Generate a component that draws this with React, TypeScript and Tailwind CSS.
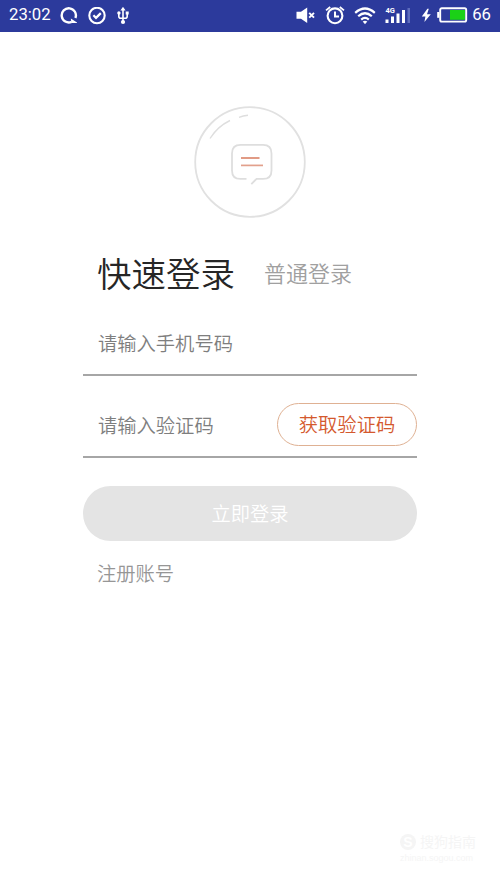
import { useState } from "react"

function SyncIcon() {
  return (
    <svg className="ml-[9px] shrink-0" width="18" height="18" viewBox="0 0 18 18" fill="none">
      <path d="M11.6 14.9A7.1 7.1 0 1 1 15.4 11" stroke="#fff" strokeWidth="2.4" />
      <path d="M10.8 11.4L17 15.4V16H11.4Z" fill="#fff" />
    </svg>
  )
}

function CheckIcon() {
  return (
    <svg className="ml-[10px] shrink-0" width="18" height="18" viewBox="0 0 18 18" fill="none">
      <circle cx="9" cy="8.5" r="7.7" stroke="#fff" strokeWidth="2.1" />
      <path d="M5.4 8.3L8 10.9L12.8 6.1" stroke="#fff" strokeWidth="2.2" />
    </svg>
  )
}

function UsbIcon() {
  return (
    <svg className="ml-[11px] shrink-0" width="12" height="18" viewBox="0 0 12 18" fill="none">
      <path d="M6 3V15M1.8 6V9.2Q1.8 11.2 3.8 11.2H8.2Q10.2 11.2 10.2 9.2V6" stroke="#fff" strokeWidth="1.6" />
      <path d="M6 -0.2L8.6 3.6H3.4Z" fill="#fff" />
      <circle cx="1.9" cy="6" r="1.7" fill="#fff" />
      <rect x="8.7" y="4.5" width="3" height="3" fill="#fff" />
      <circle cx="6" cy="15" r="2.1" fill="#fff" />
    </svg>
  )
}

function MuteIcon() {
  return (
    <svg className="shrink-0" width="20" height="18" viewBox="0 0 20 18" fill="none">
      <path d="M0.5 4.8H5L11.2 0.5V16L5 11.8H0.5Z" fill="#fff" />
      <path d="M13.2 5.8L18 10.6M18 5.8L13.2 10.6" stroke="#fff" strokeWidth="1.9" />
    </svg>
  )
}

function AlarmIcon() {
  return (
    <svg className="ml-[9px] shrink-0" width="20" height="20" viewBox="0 0 20 20" fill="none">
      <circle cx="10" cy="9.8" r="7.4" stroke="#fff" strokeWidth="2.1" />
      <path d="M10 5.4V10.4H14" stroke="#fff" strokeWidth="2" />
      <path d="M1 4.4L5.2 1M19 4.4L14.8 1" stroke="#fff" strokeWidth="1.8" />
    </svg>
  )
}

function WifiIcon() {
  return (
    <svg className="ml-[9px] shrink-0" width="22" height="18" viewBox="0 0 22 18" fill="none">
      <path d="M1.2 5.8Q11 -2.8 20.8 5.8" stroke="#fff" strokeWidth="2.2" />
      <path d="M4.2 9.3Q11 3.2 17.8 9.3" stroke="#fff" strokeWidth="2.2" />
      <path d="M7.2 12.6Q11 9.2 14.8 12.6" stroke="#fff" strokeWidth="2.2" />
      <path d="M8.7 14.6Q11 13 13.3 14.6L11 17.2Z" fill="#fff" />
    </svg>
  )
}

function SignalIcon() {
  return (
    <svg className="ml-[9px] shrink-0" width="26" height="18" viewBox="0 0 26 18">
      <text x="0.5" y="6" fill="#fff" fontSize="7.5" fontWeight="700" fontFamily="Roboto, sans-serif">4G</text>
      <rect x="0.5" y="12.5" width="3" height="3.5" fill="#fff" />
      <rect x="6" y="9.5" width="3" height="6.5" fill="#fff" />
      <rect x="11.5" y="6.5" width="3" height="9.5" fill="#fff" />
      <rect x="17" y="3" width="3" height="13" fill="#fff" />
      <rect x="22.5" y="1" width="2.5" height="15" fill="#5e6cbc" />
    </svg>
  )
}

function BatteryIcon() {
  return (
    <svg className="ml-[10px] shrink-0" width="47" height="17" viewBox="0 0 47 17" fill="none">
      <path d="M6.4 1.8L0.8 9.6H4.4L3.4 15L9.8 7.2H6L7.8 1.8Z" fill="#fff" />
      <rect x="19.2" y="1.2" width="26" height="13.4" rx="1.6" stroke="#fff" strokeWidth="1.9" />
      <path d="M18.4 5H16.2V10.8H18.4" fill="#fff" />
      <rect x="29" y="3" width="15" height="9.8" fill="#1bd117" />
    </svg>
  )
}

function StatusBar() {
  return (
    <header className="flex h-8 items-center bg-[#2c3a9c] pr-[9px] pb-px pl-[9px] font-[Roboto,sans-serif] text-[16.7px] leading-none font-normal text-white">
      <span className="w-[42px]">23:02</span>
      <SyncIcon />
      <CheckIcon />
      <UsbIcon />
      <div className="ml-auto flex items-center">
        <MuteIcon />
        <AlarmIcon />
        <WifiIcon />
        <SignalIcon />
        <BatteryIcon />
        <span className="ml-[4px]">66</span>
      </div>
    </header>
  )
}

function Logo() {
  return (
    <svg className="mx-auto mt-[74px] block" width="112" height="112" viewBox="0 0 112 112" fill="none">
      <circle cx="56" cy="56" r="54.8" stroke="#e1e1e1" strokeWidth="1.8" />
      <path d="M16 32.5Q23.5 20.5 36 14.5" stroke="#dedede" strokeWidth="1.4" />
      <path d="M45 11.3Q49 9.8 54 9.3" stroke="#dedede" strokeWidth="1.4" />
      <path
        d="M52.5 72.9H46.5Q38 72.9 38 64.4V47.4Q38 38.9 46.5 38.9H69Q77.5 38.9 77.5 47.4V64.4Q77.5 72.9 69 72.9H62.5L57.3 78.2"
        stroke="#dedede"
        strokeWidth="1.8"
      />
      <path d="M47 52H65.5" stroke="#dc8a70" strokeWidth="1.7" />
      <path d="M47 59.4H69" stroke="#e2a08c" strokeWidth="1.7" />
    </svg>
  )
}

export default function App() {
  const [phone, setPhone] = useState("")
  const [code, setCode] = useState("")

  return (
    <div className="flex h-[888px] w-[500px] flex-col bg-white font-['Noto_Sans_CJK_SC',sans-serif] font-[350]">
      <StatusBar />
      <Logo />
      <main className="mx-auto flex w-[334px] flex-col">
        <div className="mt-[28px] flex h-[52px] items-center pl-[14px]">
          <h1 className="text-[34.5px] leading-[52px] text-[#262626]">快速登录</h1>
          <button className="ml-[29px] text-[22px] leading-[52px] text-[#a0a0a0]">普通登录</button>
        </div>
        <div className="mt-[14px] flex h-[64px] items-center border-b-2 border-[#a6a6a6] pl-[15px]">
          <input
            value={phone}
            onChange={(e) => setPhone(e.target.value)}
            placeholder="请输入手机号码"
            className="h-8 w-full text-[19.3px] outline-none placeholder:text-[#7e7e7e]"
          />
        </div>
        <div className="mt-[18px] flex h-[64px] items-center border-b-2 border-[#a6a6a6] pb-px pl-[15px]">
          <input
            value={code}
            onChange={(e) => setCode(e.target.value)}
            placeholder="请输入验证码"
            className="h-8 w-[179px] text-[19.3px] outline-none placeholder:text-[#7e7e7e]"
          />
          <button className="h-[43px] w-[140px] shrink-0 rounded-full border border-[#dfb193] text-[19.3px] leading-none text-[#d4592e]">
            获取验证码
          </button>
        </div>
        <button className="mt-[28px] h-[55px] rounded-full bg-[#e4e4e4] text-[19.3px] leading-none text-white">
          立即登录
        </button>
        <button className="mt-[16px] ml-[14px] self-start text-[19.3px] leading-8 text-[#969696]">注册账号</button>
      </main>
      <footer className="mt-auto mr-[23px] mb-[23px] flex w-[77px] flex-col self-end text-[#f5f5f5]">
        <div className="flex items-center gap-1">
          <span className="flex size-4 items-center justify-center rounded-full bg-[#f5f5f5] font-['Liberation_Sans',sans-serif] text-[14px] leading-none font-bold text-white">
            S
          </span>
          <span className="text-[14px] leading-[21px] font-normal">搜狗指南</span>
        </div>
        <span className="font-['Liberation_Sans',sans-serif] text-[9px] leading-[13px] font-normal">
          zhinan.sogou.com
        </span>
      </footer>
    </div>
  )
}
